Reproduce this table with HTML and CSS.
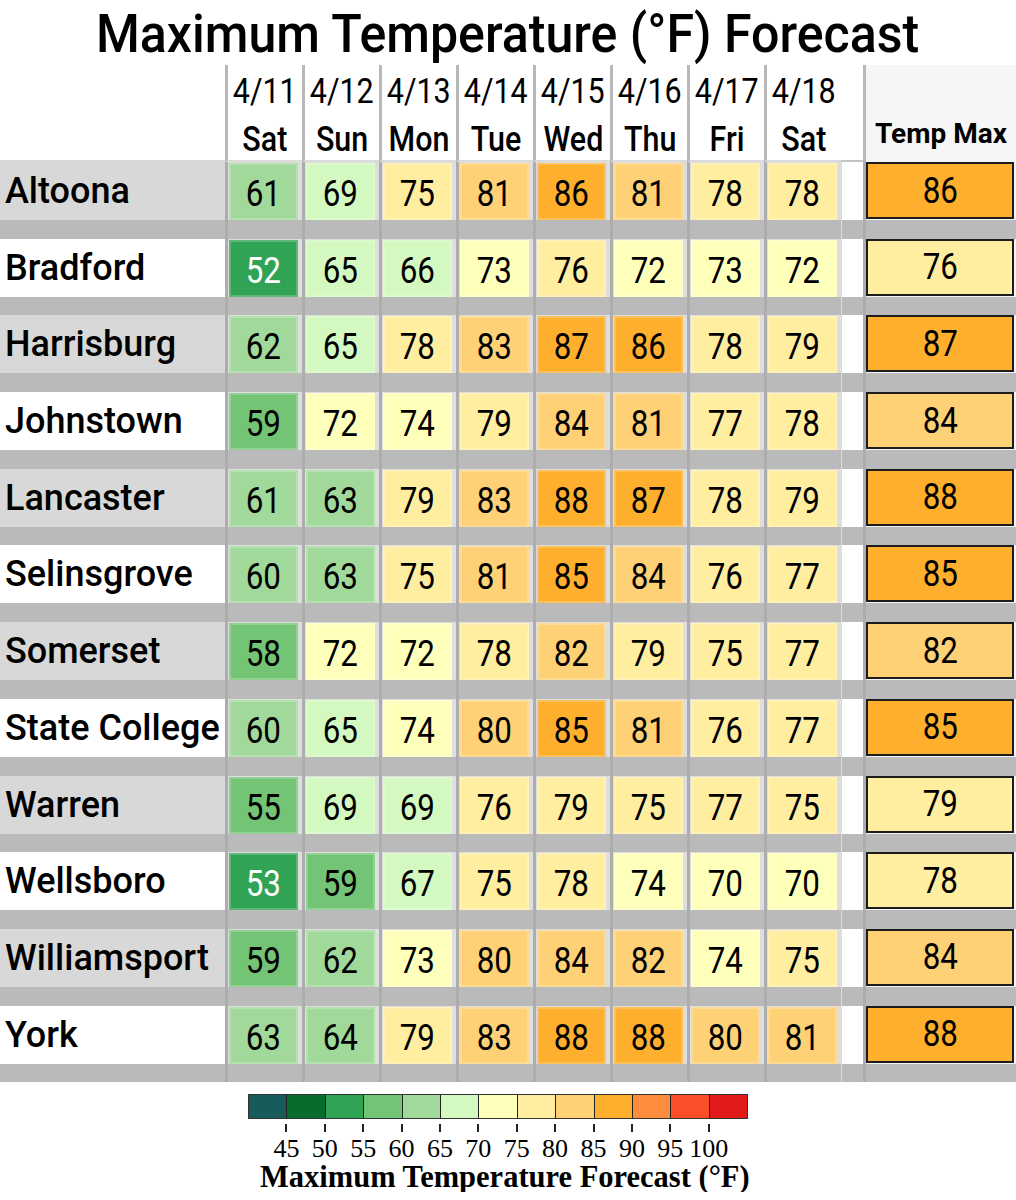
FILE: index.html
```html
<!DOCTYPE html>
<html>
<head>
<meta charset="utf-8">
<link rel="stylesheet" href="styles.css">
</head>
<body>
<div class="chart">
  <h1 class="title"><span>Maximum Temperature (°F) Forecast</span></h1>
  <div class="table">
    <div class="hname"></div>
    <div class="hday"><span>4/11</span><span class="dw">Sat</span></div>
    <div class="hday"><span>4/12</span><span class="dw">Sun</span></div>
    <div class="hday"><span>4/13</span><span class="dw">Mon</span></div>
    <div class="hday"><span>4/14</span><span class="dw">Tue</span></div>
    <div class="hday"><span>4/15</span><span class="dw">Wed</span></div>
    <div class="hday"><span>4/16</span><span class="dw">Thu</span></div>
    <div class="hday"><span>4/17</span><span class="dw">Fri</span></div>
    <div class="hday"><span>4/18</span><span class="dw">Sat</span></div>
    <div class="hstub"></div>
    <div class="hmax"><span>Temp Max</span></div>

    <div class="name odd"><span>Altoona</span></div>
    <div class="d"><span class="v c60"><span>61</span></span></div>
    <div class="d"><span class="v c65"><span>69</span></span></div>
    <div class="d"><span class="v c75"><span>75</span></span></div>
    <div class="d"><span class="v c80"><span>81</span></span></div>
    <div class="d"><span class="v c85"><span>86</span></span></div>
    <div class="d"><span class="v c80"><span>81</span></span></div>
    <div class="d"><span class="v c75"><span>78</span></span></div>
    <div class="d"><span class="v c75"><span>78</span></span></div>
    <div class="s"></div>
    <div class="m"><span class="box c85"><span>86</span></span></div>

    <div class="name"><span>Bradford</span></div>
    <div class="d"><span class="v c50"><span>52</span></span></div>
    <div class="d"><span class="v c65"><span>65</span></span></div>
    <div class="d"><span class="v c65"><span>66</span></span></div>
    <div class="d"><span class="v c70"><span>73</span></span></div>
    <div class="d"><span class="v c75"><span>76</span></span></div>
    <div class="d"><span class="v c70"><span>72</span></span></div>
    <div class="d"><span class="v c70"><span>73</span></span></div>
    <div class="d"><span class="v c70"><span>72</span></span></div>
    <div class="s"></div>
    <div class="m"><span class="box c75"><span>76</span></span></div>

    <div class="name odd"><span>Harrisburg</span></div>
    <div class="d"><span class="v c60"><span>62</span></span></div>
    <div class="d"><span class="v c65"><span>65</span></span></div>
    <div class="d"><span class="v c75"><span>78</span></span></div>
    <div class="d"><span class="v c80"><span>83</span></span></div>
    <div class="d"><span class="v c85"><span>87</span></span></div>
    <div class="d"><span class="v c85"><span>86</span></span></div>
    <div class="d"><span class="v c75"><span>78</span></span></div>
    <div class="d"><span class="v c75"><span>79</span></span></div>
    <div class="s"></div>
    <div class="m"><span class="box c85"><span>87</span></span></div>

    <div class="name"><span>Johnstown</span></div>
    <div class="d"><span class="v c55"><span>59</span></span></div>
    <div class="d"><span class="v c70"><span>72</span></span></div>
    <div class="d"><span class="v c70"><span>74</span></span></div>
    <div class="d"><span class="v c75"><span>79</span></span></div>
    <div class="d"><span class="v c80"><span>84</span></span></div>
    <div class="d"><span class="v c80"><span>81</span></span></div>
    <div class="d"><span class="v c75"><span>77</span></span></div>
    <div class="d"><span class="v c75"><span>78</span></span></div>
    <div class="s"></div>
    <div class="m"><span class="box c80"><span>84</span></span></div>

    <div class="name odd"><span>Lancaster</span></div>
    <div class="d"><span class="v c60"><span>61</span></span></div>
    <div class="d"><span class="v c60"><span>63</span></span></div>
    <div class="d"><span class="v c75"><span>79</span></span></div>
    <div class="d"><span class="v c80"><span>83</span></span></div>
    <div class="d"><span class="v c85"><span>88</span></span></div>
    <div class="d"><span class="v c85"><span>87</span></span></div>
    <div class="d"><span class="v c75"><span>78</span></span></div>
    <div class="d"><span class="v c75"><span>79</span></span></div>
    <div class="s"></div>
    <div class="m"><span class="box c85"><span>88</span></span></div>

    <div class="name"><span>Selinsgrove</span></div>
    <div class="d"><span class="v c60"><span>60</span></span></div>
    <div class="d"><span class="v c60"><span>63</span></span></div>
    <div class="d"><span class="v c75"><span>75</span></span></div>
    <div class="d"><span class="v c80"><span>81</span></span></div>
    <div class="d"><span class="v c85"><span>85</span></span></div>
    <div class="d"><span class="v c80"><span>84</span></span></div>
    <div class="d"><span class="v c75"><span>76</span></span></div>
    <div class="d"><span class="v c75"><span>77</span></span></div>
    <div class="s"></div>
    <div class="m"><span class="box c85"><span>85</span></span></div>

    <div class="name odd"><span>Somerset</span></div>
    <div class="d"><span class="v c55"><span>58</span></span></div>
    <div class="d"><span class="v c70"><span>72</span></span></div>
    <div class="d"><span class="v c70"><span>72</span></span></div>
    <div class="d"><span class="v c75"><span>78</span></span></div>
    <div class="d"><span class="v c80"><span>82</span></span></div>
    <div class="d"><span class="v c75"><span>79</span></span></div>
    <div class="d"><span class="v c75"><span>75</span></span></div>
    <div class="d"><span class="v c75"><span>77</span></span></div>
    <div class="s"></div>
    <div class="m"><span class="box c80"><span>82</span></span></div>

    <div class="name"><span>State College</span></div>
    <div class="d"><span class="v c60"><span>60</span></span></div>
    <div class="d"><span class="v c65"><span>65</span></span></div>
    <div class="d"><span class="v c70"><span>74</span></span></div>
    <div class="d"><span class="v c80"><span>80</span></span></div>
    <div class="d"><span class="v c85"><span>85</span></span></div>
    <div class="d"><span class="v c80"><span>81</span></span></div>
    <div class="d"><span class="v c75"><span>76</span></span></div>
    <div class="d"><span class="v c75"><span>77</span></span></div>
    <div class="s"></div>
    <div class="m"><span class="box c85"><span>85</span></span></div>

    <div class="name odd"><span>Warren</span></div>
    <div class="d"><span class="v c55"><span>55</span></span></div>
    <div class="d"><span class="v c65"><span>69</span></span></div>
    <div class="d"><span class="v c65"><span>69</span></span></div>
    <div class="d"><span class="v c75"><span>76</span></span></div>
    <div class="d"><span class="v c75"><span>79</span></span></div>
    <div class="d"><span class="v c75"><span>75</span></span></div>
    <div class="d"><span class="v c75"><span>77</span></span></div>
    <div class="d"><span class="v c75"><span>75</span></span></div>
    <div class="s"></div>
    <div class="m"><span class="box c75"><span>79</span></span></div>

    <div class="name"><span>Wellsboro</span></div>
    <div class="d"><span class="v c50"><span>53</span></span></div>
    <div class="d"><span class="v c55"><span>59</span></span></div>
    <div class="d"><span class="v c65"><span>67</span></span></div>
    <div class="d"><span class="v c75"><span>75</span></span></div>
    <div class="d"><span class="v c75"><span>78</span></span></div>
    <div class="d"><span class="v c70"><span>74</span></span></div>
    <div class="d"><span class="v c70"><span>70</span></span></div>
    <div class="d"><span class="v c70"><span>70</span></span></div>
    <div class="s"></div>
    <div class="m"><span class="box c75"><span>78</span></span></div>

    <div class="name odd"><span>Williamsport</span></div>
    <div class="d"><span class="v c55"><span>59</span></span></div>
    <div class="d"><span class="v c60"><span>62</span></span></div>
    <div class="d"><span class="v c70"><span>73</span></span></div>
    <div class="d"><span class="v c80"><span>80</span></span></div>
    <div class="d"><span class="v c80"><span>84</span></span></div>
    <div class="d"><span class="v c80"><span>82</span></span></div>
    <div class="d"><span class="v c70"><span>74</span></span></div>
    <div class="d"><span class="v c75"><span>75</span></span></div>
    <div class="s"></div>
    <div class="m"><span class="box c80"><span>84</span></span></div>

    <div class="name"><span>York</span></div>
    <div class="d"><span class="v c60"><span>63</span></span></div>
    <div class="d"><span class="v c60"><span>64</span></span></div>
    <div class="d"><span class="v c75"><span>79</span></span></div>
    <div class="d"><span class="v c80"><span>83</span></span></div>
    <div class="d"><span class="v c85"><span>88</span></span></div>
    <div class="d"><span class="v c85"><span>88</span></span></div>
    <div class="d"><span class="v c80"><span>80</span></span></div>
    <div class="d"><span class="v c80"><span>81</span></span></div>
    <div class="s"></div>
    <div class="m"><span class="box c85"><span>88</span></span></div>
  </div>

  <div class="legend">
    <div class="bar">
      <span class="c40"></span><span class="c45"></span><span class="c50"></span><span class="c55"></span>
      <span class="c60"></span><span class="c65"></span><span class="c70"></span><span class="c75"></span>
      <span class="c80"></span><span class="c85"></span><span class="c90"></span><span class="c95"></span>
      <span class="c100"></span>
    </div>
    <div class="ticks">
      <span></span><span></span><span></span><span></span><span></span><span></span>
      <span></span><span></span><span></span><span></span><span></span><span></span>
    </div>
    <div class="labels">
      <span>45</span><span>50</span><span>55</span><span>60</span><span>65</span><span>70</span>
      <span>75</span><span>80</span><span>85</span><span>90</span><span>95</span><span>100</span>
    </div>
    <div class="ltitle">Maximum Temperature Forecast (°F)</div>
  </div>
</div>
</body>
</html>
```

FILE: styles.css
```css
html, body {
  margin: 0;
  padding: 0;
  background: #ffffff;
}

.chart {
  width: 1016px;
  font-family: Roboto, "Noto Sans", sans-serif;
  color: #000;
}

.title {
  margin: 0;
  height: 65px;
  font-size: 54px;
  font-weight: 500;
  line-height: 65px;
  text-align: center;
  white-space: nowrap;
}

.title span {
  display: inline-block;
  transform: scaleX(0.928);
  position: relative;
  top: 1px;
}

.table {
  display: grid;
  grid-template-columns: 225px repeat(8, 77px) 22px 153px;
  grid-template-rows: 97px;
  grid-auto-rows: 76.7px;
}

.hname, .hstub {
  background: #fff;
  border-bottom: 2px solid #dadada;
}

.hstub {
  border-bottom-color: #c4c4c4;
}

.hday {
  border-left: 3px solid #b8b8b8;
  border-bottom: 2px solid #dadada;
  background: #fff;
  display: flex;
  flex-direction: column;
  align-items: center;
  padding-top: 3px;
  font-size: 35px;
  line-height: 48px;
}

.hday span {
  display: block;
  transform: scaleX(0.87);
}

.hday .dw {
  font-weight: 500;
}

.hmax {
  border-left: 3px solid #b8b8b8;
  background: #f6f6f6;
  display: flex;
  justify-content: center;
  align-items: flex-end;
  padding-bottom: 12px;
  font-size: 28px;
  font-weight: 700;
}

.hmax span {
  display: inline-block;
}

.name {
  background: linear-gradient(#ffffff 0 58px, #bababa 58px);
  height: 58px;
  padding-bottom: 18.7px;
  display: flex;
  align-items: center;
  padding-left: 5px;
  font-size: 36px;
  font-weight: 500;
  white-space: nowrap;
}

.name.odd {
  background: linear-gradient(#d8d8d8 0 58px, #bababa 58px);
}

.name span {
  display: inline-block;
}

.d {
  border-left: 3px solid #adadad;
  background: linear-gradient(#dedede 0 58px, #bababa 58px);
  padding: 1px 4px 0 1px;
}

.v {
  display: flex;
  justify-content: center;
  align-items: center;
  height: 57px;
  box-sizing: border-box;
  box-shadow: inset 0 0 0 2px rgba(255, 255, 255, 0.22);
  font-size: 36px;
  padding-top: 5px;
}

.v span, .box span {
  display: inline-block;
  transform: scaleX(0.87);
}

.s {
  border-left: 1px solid #dcdcdc;
  background: linear-gradient(#ffffff 0 58px, #bababa 58px);
}

.m {
  border-left: 3px solid #adadad;
  background: linear-gradient(#f4f4f4 0 58px, #bababa 58px);
  padding: 0 2px 0 0;
}

.box {
  display: flex;
  justify-content: center;
  align-items: center;
  height: 57px;
  box-sizing: border-box;
  border: 2px solid #1c1c1c;
  font-size: 36px;
}

.c50 { color: #fff; }

.c40 { background: #195a5a; }
.c45 { background: #0a6b2e; }
.c50 { background: #31a354; }
.c55 { background: #74c476; }
.c60 { background: #a1d99b; }
.c65 { background: #d4f9c0; }
.c70 { background: #ffffbc; }
.c75 { background: #ffeda0; }
.c80 { background: #fed176; }
.c85 { background: #feaf2e; }
.c90 { background: #fd8d3c; }
.c95 { background: #fc4e2a; }
.c100 { background: #e31a1c; }

.legend {
  margin-top: 12px;
  margin-left: 248px;
  width: 500px;
  font-family: "Liberation Serif", "Times New Roman", serif;
}

.bar {
  display: flex;
  height: 25px;
  border: 1px solid #333;
  box-sizing: border-box;
}

.bar span {
  flex: 1;
  border-left: 1px solid #222;
}

.bar span:first-child {
  border-left: none;
}

.ticks {
  display: flex;
  margin-left: 19.2px;
  height: 8px;
  margin-top: 5px;
}

.ticks span {
  width: 38.4px;
  display: flex;
  justify-content: center;
}

.ticks span::before {
  content: "";
  width: 2px;
  height: 8px;
  background: #222;
}

.labels {
  display: flex;
  margin-left: 19.2px;
  font-size: 26px;
  line-height: 26px;
  margin-top: 4px;
}

.labels span {
  width: 38.4px;
  text-align: center;
  white-space: nowrap;
  display: flex;
  justify-content: center;
}

.ltitle {
  font-size: 30.5px;
  font-weight: 700;
  line-height: 30px;
  text-align: center;
  white-space: nowrap;
  margin-left: 12px;
}
```
